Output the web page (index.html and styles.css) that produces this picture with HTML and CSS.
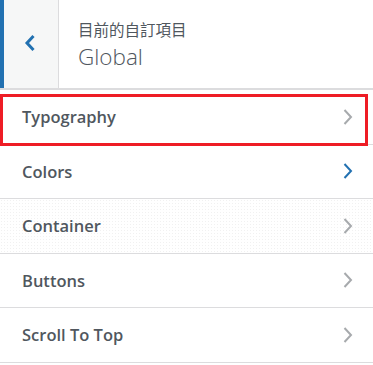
FILE: index.html
```html
<!DOCTYPE html>
<html lang="zh-Hant">
<head>
    <meta charset="UTF-8">
    <meta name="viewport" content="width=device-width, initial-scale=1.0">
    <title>Global</title>
    <link rel="stylesheet" href="styles.css">
</head>
<body>
    <div class="panel">
        <div class="section-head">
            <button class="back" aria-label="Back">
                <svg width="12" height="18" viewBox="0 0 12 18"><polyline points="9.5,2 3,9 9.5,16" /></svg>
            </button>
            <div class="title">
                <span class="crumb">目前的自訂項目</span>
                <h3>Global</h3>
            </div>
        </div>

        <ul class="sections">
            <li class="item marked">
                <span>Typography</span>
                <svg class="arrow" width="10" height="18" viewBox="0 0 10 18"><polyline points="1.5,2 8,9 1.5,16" /></svg>
            </li>
            <li class="item active">
                <span>Colors</span>
                <svg class="arrow" width="10" height="18" viewBox="0 0 10 18"><polyline points="1.5,2 8,9 1.5,16" /></svg>
            </li>
            <li class="item hover">
                <span>Container</span>
                <svg class="arrow" width="10" height="18" viewBox="0 0 10 18"><polyline points="1.5,2 8,9 1.5,16" /></svg>
            </li>
            <li class="item">
                <span>Buttons</span>
                <svg class="arrow" width="10" height="18" viewBox="0 0 10 18"><polyline points="1.5,2 8,9 1.5,16" /></svg>
            </li>
            <li class="item">
                <span>Scroll To Top</span>
                <svg class="arrow" width="10" height="18" viewBox="0 0 10 18"><polyline points="1.5,2 8,9 1.5,16" /></svg>
            </li>
        </ul>
    </div>
</body>
</html>
```

FILE: styles.css
```css
* {
    margin: 0;
    padding: 0;
    box-sizing: border-box;
}

body {
    background: #fff;
    font-family: "Open Sans", "Noto Sans CJK TC", sans-serif;
    color: #50575e;
}

.panel {
    width: 373px;
    height: 365px;
    overflow: hidden;
    background: #fff;
}

.section-head {
    display: flex;
    height: 90px;
    border-bottom: 2px solid #dcdcde;
}

.back {
    width: 59px;
    background: #f6f7f7;
    border: none;
    border-left: 4px solid #2271b1;
    border-right: 1px solid #dcdcde;
    display: flex;
    align-items: center;
    justify-content: center;
    padding-right: 3px;
    padding-bottom: 2px;
}

.back polyline {
    fill: none;
    stroke: #2271b1;
    stroke-width: 3;
}

.title {
    padding: 18px 0 0 19px;
    display: flex;
    flex-direction: column;
}

.crumb {
    font-size: 15.5px;
    line-height: 22px;
    font-family: "Noto Sans CJK TC", sans-serif;
}

.title h3 {
    font-size: 22.5px;
    font-weight: 300;
    line-height: 34px;
    color: #50575e;
}

.sections {
    list-style: none;
}

.item {
    position: relative;
    height: 54.5px;
    display: flex;
    align-items: center;
    justify-content: space-between;
    padding: 0 20px 0 22px;
    border-bottom: 1px solid #dcdcde;
    font-size: 16.5px;
    font-weight: 600;
}

.item .arrow polyline {
    fill: none;
    stroke: #a7aaad;
    stroke-width: 2;
}

.item.active .arrow polyline {
    stroke: #2271b1;
}

.item.hover {
    background-color: #fff;
    background-image: radial-gradient(#f1f1f1 0.6px, transparent 0.7px);
    background-size: 3px 3px;
}

.item.marked::after {
    content: "";
    position: absolute;
    top: 4px;
    left: 0;
    right: 5px;
    bottom: -2px;
    border: 3px solid #ee1c25;
}
```
